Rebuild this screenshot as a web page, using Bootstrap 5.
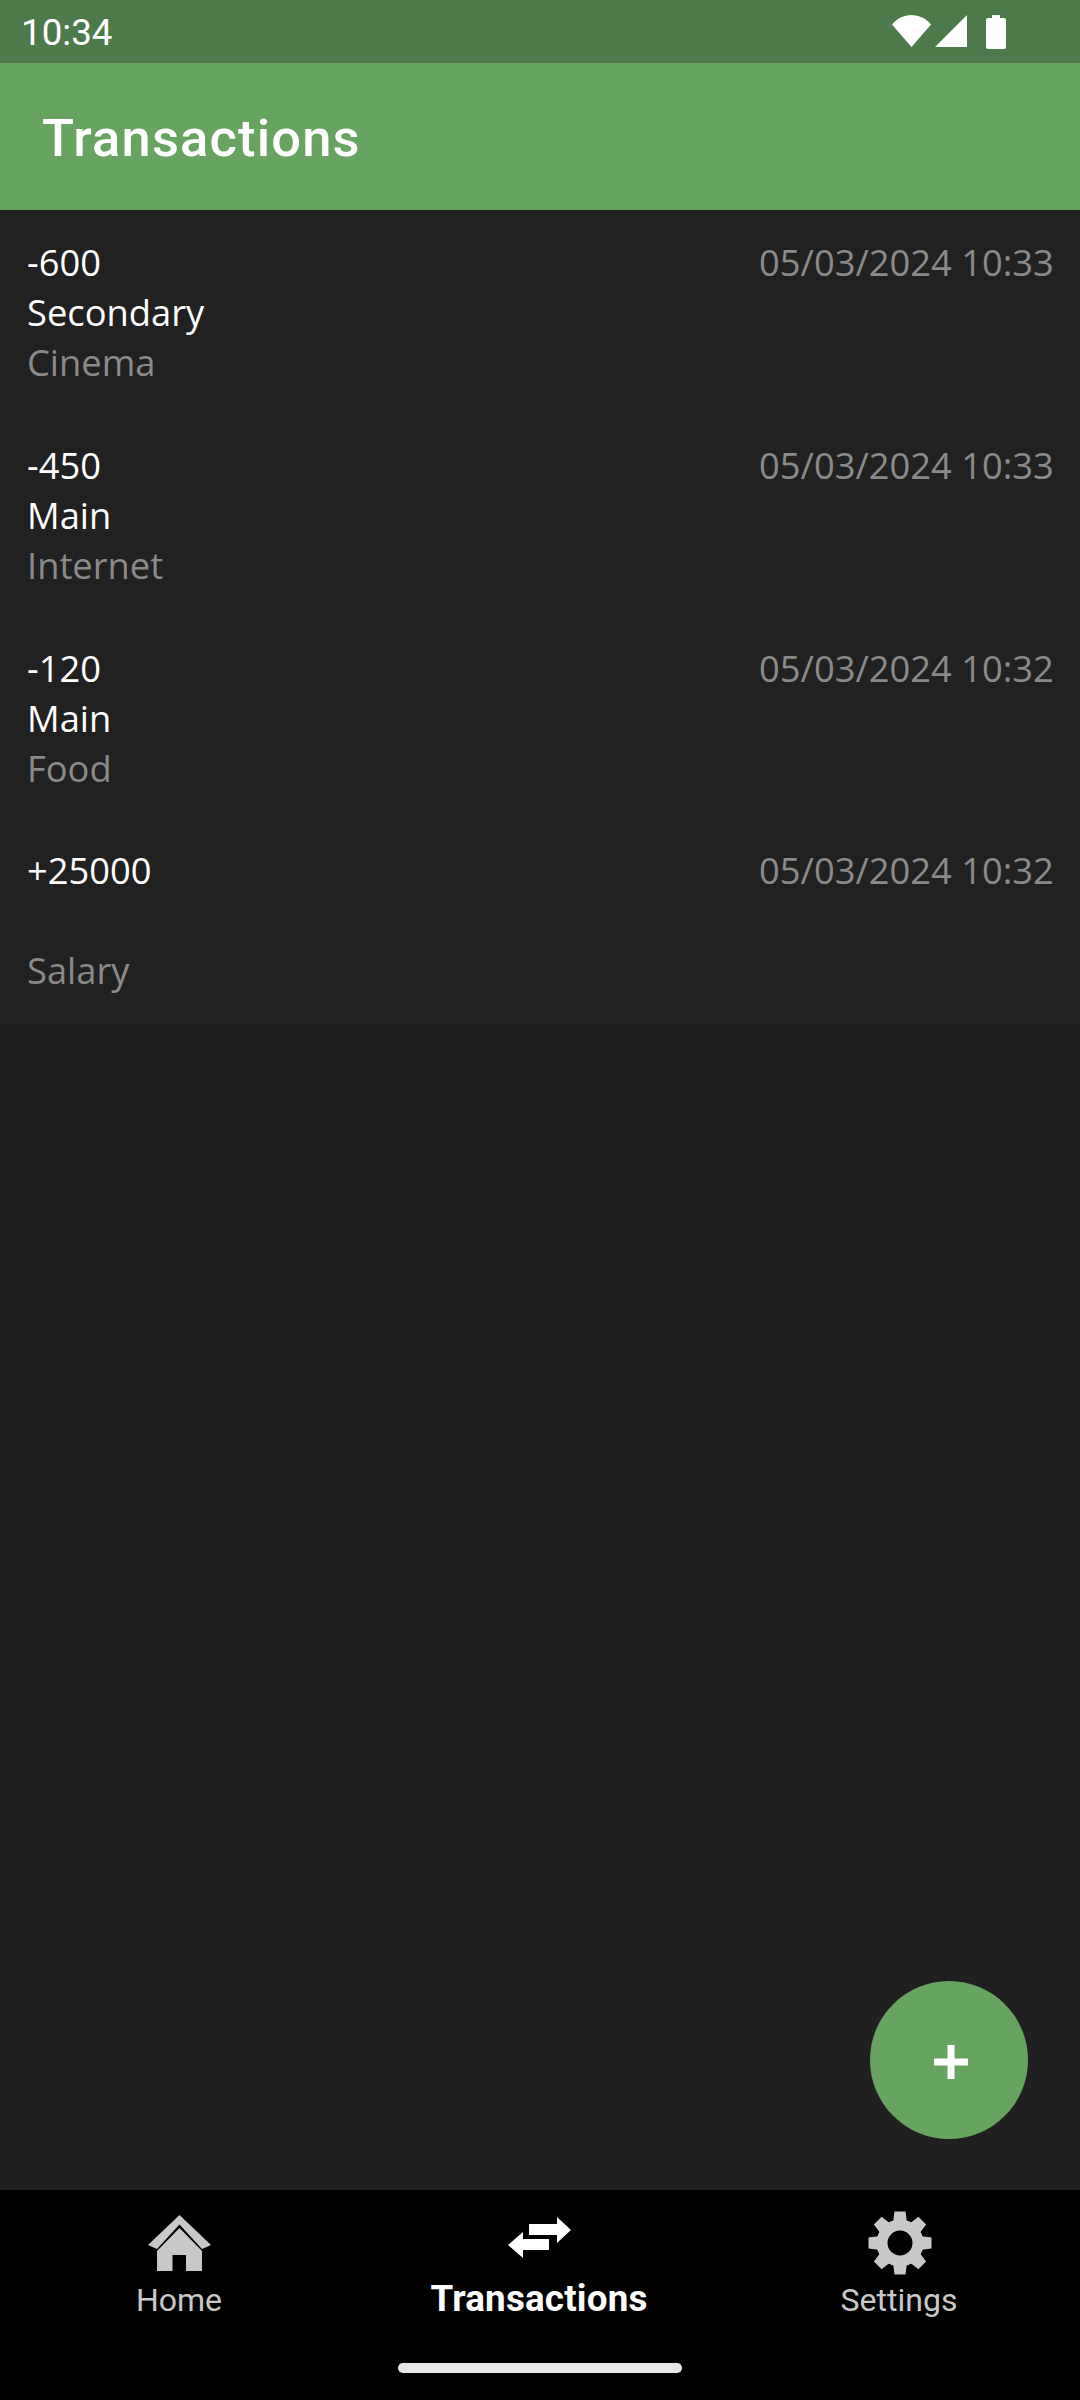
<!DOCTYPE html>
<html lang="en">
<head>
<meta charset="utf-8">
<title>Transactions</title>
<link href="https://cdn.jsdelivr.net/npm/bootstrap@5.3.0/dist/css/bootstrap.min.css" rel="stylesheet">
<style>
html, body { height: 100%; }
body { background: #202020; font-family: "Open Sans", "Noto Sans", sans-serif; }
.status-strip { height: 63px; flex: none; background: #4c7a4a; color: #fff; padding: 0 74px 0 21px; font-family: Roboto, sans-serif; font-size: 36.75px; line-height: 1; }
.status-icons { gap: 4px; height: 34px; }
.status-icons svg { display: block; fill: #fff; }
.status-time { position: relative; top: 2px; }
.battery-icon { margin-left: 15px; }
.app-bar { height: 147px; flex: none; background: #66a460; padding: 3px 42px 0; }
.app-bar .navbar-brand { margin: 0; padding: 0; color: #fff; font-family: Roboto, sans-serif; font-weight: 500; font-size: 52.5px; line-height: 1; letter-spacing: 1.15px; }
.content-area { min-height: 0; }
.tx-list { border-radius: 0; background: #212121; }
.tx-list .list-group-item { background: transparent; border: 0; border-radius: 0; padding: 27px 26.25px 25.75px 27px; height: 202.75px; font-size: 36.3px; line-height: 50px; color: #fff; }
.tx-date, .tx-cat { color: #8a8a8a; }
.tx-line { height: 50px; }
.add-fab { position: absolute; right: 52px; bottom: 51px; width: 158px; height: 158px; background: #66a460; border: 0; border-radius: 50%; padding: 0; }
.add-fab svg { display: block; margin: 3px 0 0 3px; }
.tab-strip { height: 210px; flex: none; background: #000; }
.tab-item { width: 360px; padding-top: 21px; color: #c8c8c8; font-family: Roboto, sans-serif; font-size: 32px; line-height: 37px; text-decoration: none; }
.tab-item svg { display: block; fill: currentColor; }
.tab-item.tab-on { color: #fff; font-weight: 700; font-size: 36.75px; letter-spacing: .2px; }
.tab-label { margin: 7px 2px 0 0; }
.tab-on .tab-label { margin-top: 5px; }
.gesture-pill { position: absolute; left: 398px; bottom: 27px; width: 284px; height: 10px; border-radius: 5px; background: #e8e8e8; }
</style>
</head>
<body>
<div class="d-flex flex-column h-100">
  <div class="status-strip d-flex justify-content-between align-items-center">
    <span class="status-time">10:34</span>
    <div class="status-icons d-flex align-items-start">
      <svg width="39" height="32" viewBox="0 0 39 32"><path d="M0 9.5C5 3.5 12 0 19.500 0S34 3.5 39 9.500L19.500 32Z"/></svg>
      <svg width="32" height="32" viewBox="0 0 32 32"><path d="M32 0V32H0Z"/></svg>
      <svg class="battery-icon" width="20" height="34" viewBox="0 0 20 34"><path d="M6 0h8v3h4a2 2 0 0 1 2 2v27a2 2 0 0 1-2 2H2a2 2 0 0 1-2-2V5a2 2 0 0 1 2-2h4Z"/></svg>
    </div>
  </div>
  <nav class="navbar app-bar"><span class="navbar-brand">Transactions</span></nav>
  <main class="content-area flex-grow-1 position-relative">
    <div class="list-group tx-list">
      <div class="list-group-item">
        <div class="tx-line d-flex justify-content-between"><span>-600</span><span class="tx-date">05/03/2024 10:33</span></div>
        <div class="tx-line">Secondary</div>
        <div class="tx-line tx-cat">Cinema</div>
      </div>
      <div class="list-group-item">
        <div class="tx-line d-flex justify-content-between"><span>-450</span><span class="tx-date">05/03/2024 10:33</span></div>
        <div class="tx-line">Main</div>
        <div class="tx-line tx-cat">Internet</div>
      </div>
      <div class="list-group-item">
        <div class="tx-line d-flex justify-content-between"><span>-120</span><span class="tx-date">05/03/2024 10:32</span></div>
        <div class="tx-line">Main</div>
        <div class="tx-line tx-cat">Food</div>
      </div>
      <div class="list-group-item">
        <div class="tx-line d-flex justify-content-between"><span>+25000</span><span class="tx-date">05/03/2024 10:32</span></div>
        <div class="tx-line"></div>
        <div class="tx-line tx-cat">Salary</div>
      </div>
    </div>
    <button class="add-fab d-flex align-items-center justify-content-center" type="button" aria-label="Add">
      <svg width="34" height="34" viewBox="0 0 34 34"><path fill="#fff" d="M13.500 0h7v13.500H34v7H20.500V34h-7V20.500H0v-7h13.500Z"/></svg>
    </button>
  </main>
  <nav class="tab-strip d-flex position-relative">
    <a class="tab-item d-flex flex-column align-items-center" href="#">
      <svg width="64" height="64" viewBox="0 0 64 64"><path d="M31.500 4 63 34l-9 4-22.500-24.500L9 38l-9-4Z"/><path d="M31.500 17 54 40v20H38V44H24.500V60H9V40Z"/></svg>
      <span class="tab-label">Home</span>
    </a>
    <a class="tab-item tab-on d-flex flex-column align-items-center" href="#">
      <svg width="64" height="64" viewBox="0 0 64 64"><path d="M21 13h28V6l14 13-14 13v-8H21Z"/><path d="M41 28H15v-7L0 34l15 13v-8h26Z"/></svg>
      <span class="tab-label">Transactions</span>
    </a>
    <a class="tab-item d-flex flex-column align-items-center" href="#">
      <svg width="64" height="64" viewBox="0 0 64 64">
        <circle cx="32" cy="32" r="18" fill="none" stroke="#c8c8c8" stroke-width="11"/>
        <path d="M26.500 .5h11l1.500 12H25Z"/>
        <path transform="rotate(45 32 32)" d="M26.500 .5h11l1.500 12H25Z"/>
        <path transform="rotate(90 32 32)" d="M26.500 .5h11l1.500 12H25Z"/>
        <path transform="rotate(135 32 32)" d="M26.500 .5h11l1.500 12H25Z"/>
        <path transform="rotate(180 32 32)" d="M26.500 .5h11l1.500 12H25Z"/>
        <path transform="rotate(225 32 32)" d="M26.500 .5h11l1.500 12H25Z"/>
        <path transform="rotate(270 32 32)" d="M26.500 .5h11l1.500 12H25Z"/>
        <path transform="rotate(315 32 32)" d="M26.500 .5h11l1.500 12H25Z"/>
      </svg>
      <span class="tab-label">Settings</span>
    </a>
    <span class="gesture-pill"></span>
  </nav>
</div>
<script src="https://cdn.jsdelivr.net/npm/bootstrap@5.3.0/dist/js/bootstrap.bundle.min.js"></script>
</body>
</html>
